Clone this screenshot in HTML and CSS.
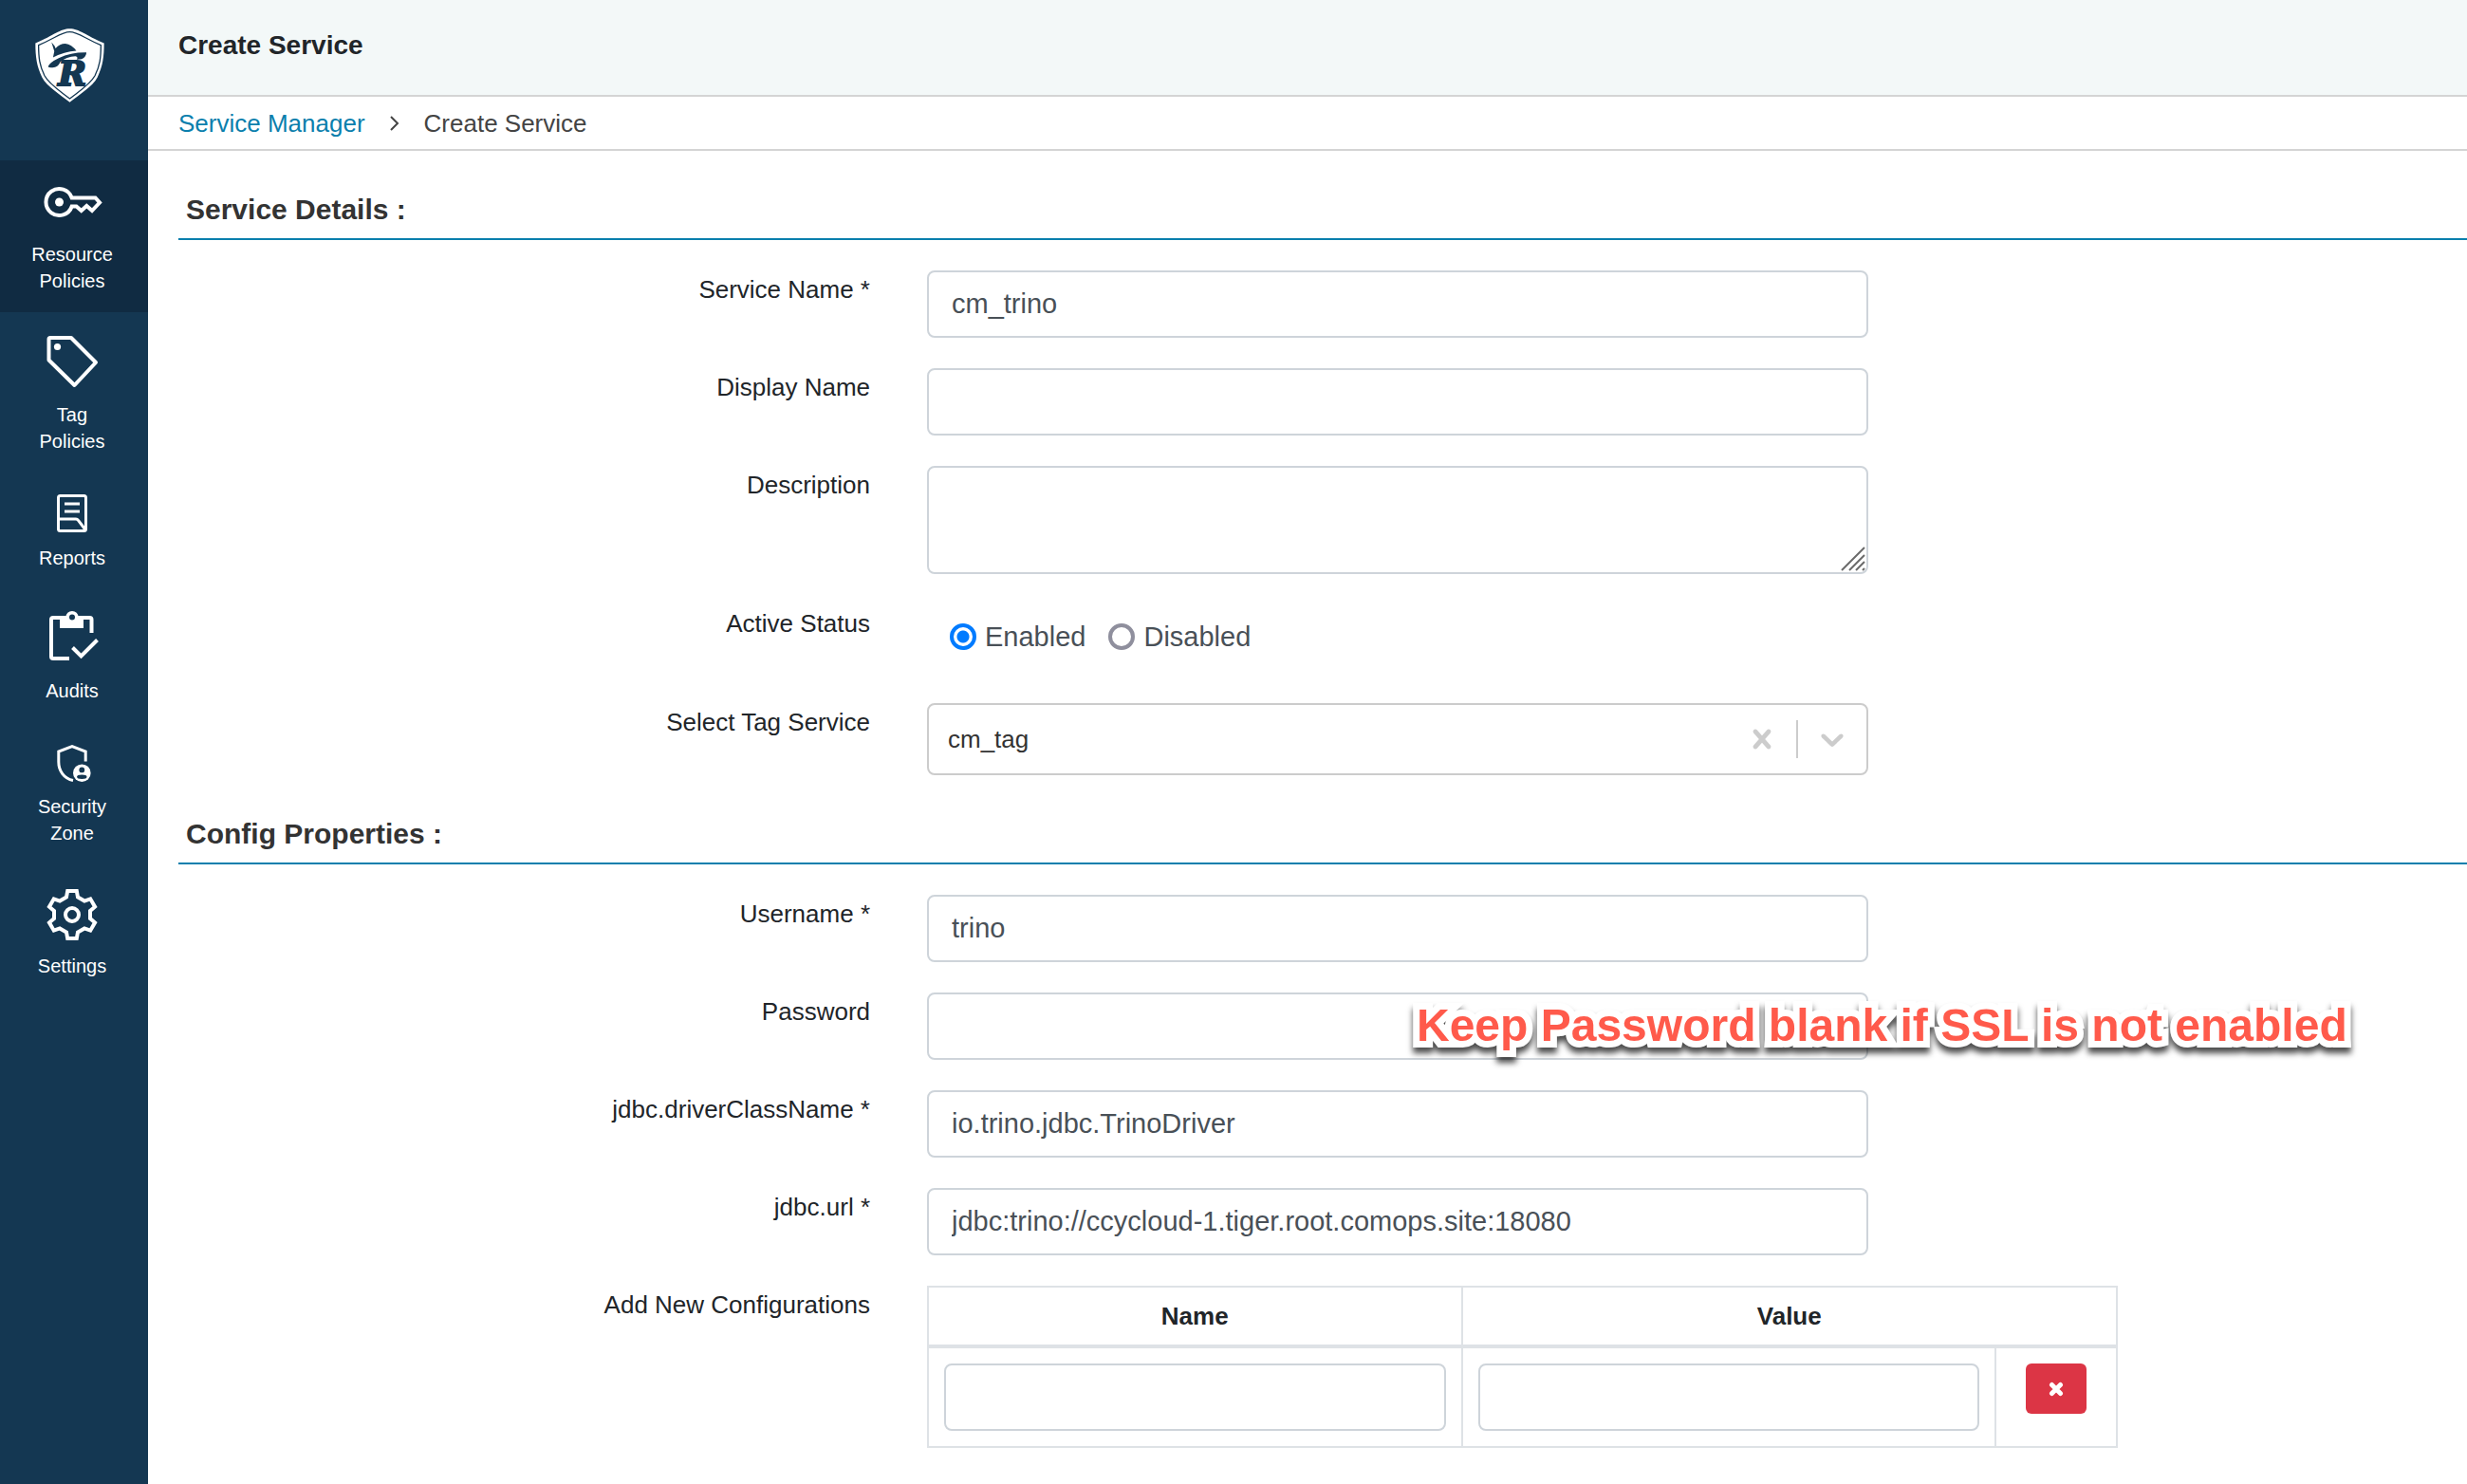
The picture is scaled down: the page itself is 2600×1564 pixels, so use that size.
FILE: index.html
```html
<!DOCTYPE html>
<html lang="en">
<head>
<meta charset="utf-8">
<title>Ranger - Create Service</title>
<link rel="stylesheet" href="styles.css">
</head>
<body>
<div class="app">
  <nav class="sidebar" aria-label="Main">
    <a class="brand" href="#" aria-label="Ranger">
      <svg width="73" height="78" viewBox="0 0 220 235">
        <path fill="#fff" d="M110 1C80 1 60 22 1 47C1 90 5 120 22 155C38 185 80 210 110 234C140 210 182 185 198 155C215 120 219 90 219 47C160 22 140 1 110 1Z"/>
        <path fill="none" stroke="#143752" stroke-width="4" d="M110 11C84 11 64 31 11 53C11 92 14 118 30 150C45 178 84 202 110 223C136 202 175 178 190 150C206 118 209 92 209 53C156 31 136 11 110 11Z"/>
        <path fill="#143752" d="M52 44L62 56L65 63Q78 48 96 48Q116 50 131 71Q92 74 57 92L61 72Z"/>
        <path fill="#143752" d="M41 121Q46 108 75 94Q115 75 163 76Q163 90 148 97L132 99Q138 90 128 88Q100 89 80 106Q72 125 54 124Q44 125 41 121Z"/>
        <text class="brand-letter" x="73" y="182">R</text>
      </svg>
    </a>
    <a class="nav-item active" href="#">
      <svg width="64" height="65" viewBox="0 0 64 65" fill="none" stroke="#fff" stroke-width="4">
        <path d="M31.7 19.5A14 14 0 1 0 31.7 28.5H36.5L41.7 33L47.3 28L53 33L61 24.5L56.5 19.5Z"/>
        <circle cx="18.5" cy="24" r="4.5" fill="#fff" stroke="none"/>
      </svg>
      <span>Resource<br>Policies</span>
    </a>
    <a class="nav-item" href="#">
      <svg width="64" height="74" viewBox="0 0 64 74" fill="none" stroke="#fff" stroke-width="4" stroke-linejoin="round">
        <path d="M9 7H31L57 33L34.500 57L7.500 30.500V8.500Q7.500 7 9 7Z"/>
        <circle cx="16.500" cy="16.500" r="3.600" fill="#fff" stroke="none"/>
      </svg>
      <span>Tag<br>Policies</span>
    </a>
    <a class="nav-item" href="#">
      <svg width="64" height="56" viewBox="0 0 64 56" fill="none" stroke="#fff" stroke-width="3">
        <rect x="17.500" y="4.500" width="29" height="37" rx="2"/>
        <path d="M24 13H40M24 21H40M17.500 29H36Q37.500 29 38.500 30.500L46.500 41"/>
      </svg>
      <span>Reports</span>
    </a>
    <a class="nav-item" href="#">
      <svg width="64" height="73" viewBox="0 0 64 73" fill="none" stroke="#fff" stroke-width="4">
        <path d="M29 53H12Q10 53 10 51V12Q10 10 12 10H50.500Q52.500 10 52.500 12V26M32.500 41.500L41.500 50.500L58.500 33.500"/>
        <path fill="#fff" stroke="none" d="M19 10H44V21H19Z"/>
        <circle cx="32" cy="9.500" r="4.800" fill="#143752" stroke-width="3.600"/>
      </svg>
      <span>Audits</span>
    </a>
    <a class="nav-item" href="#">
      <svg width="64" height="55" viewBox="0 0 64 55" fill="none" stroke="#fff" stroke-width="3">
        <path d="M46.200 21.500V11L32 5.500L17.800 11V22C17.800 31.500 23.500 39.500 33 41.500"/>
        <circle cx="42.300" cy="33.700" r="9.300" fill="#fff" stroke="none"/>
        <circle cx="42.300" cy="30.400" r="2.900" fill="#143752" stroke="none"/>
        <ellipse cx="42.300" cy="37.700" rx="5.200" ry="2.200" fill="#143752" stroke="none"/>
      </svg>
      <span>Security<br>Zone</span>
    </a>
    <a class="nav-item" href="#">
      <svg width="64" height="73" viewBox="0 0 64 73" fill="none" stroke="#fff" stroke-width="4">
        <g transform="translate(32 33)">
          <path d="M-6-18.500L-4.800-25H4.800L6-18.500L13-14.450L19.250-16.660L24.050-8.340L19-4V4L24.050 8.340L19.250 16.660L13 14.450L6 18.500L4.800 25H-4.800L-6 18.500L-13 14.450L-19.250 16.660L-24.050 8.340L-19 4V-4L-24.050-8.340L-19.250-16.660L-13-14.450Z"/>
          <circle r="7"/>
        </g>
      </svg>
      <span>Settings</span>
    </a>
  </nav>

  <main class="main">
    <header class="page-header"><h1>Create Service</h1></header>
    <nav class="breadcrumb" aria-label="Breadcrumb">
      <a href="#">Service Manager</a>
      <svg width="10" height="16" viewBox="0 0 10 16" fill="none" stroke="#444" stroke-width="2"><path d="M1 1L8 8L1 15"/></svg>
      <span>Create Service</span>
    </nav>

    <form class="form">
      <h2>Service Details :</h2>
      <div class="row">
        <label for="name">Service Name *</label>
        <div class="field"><input class="control" id="name" type="text" value="cm_trino"></div>
      </div>
      <div class="row">
        <label for="display">Display Name</label>
        <div class="field"><input class="control" id="display" type="text"></div>
      </div>
      <div class="row">
        <label for="desc">Description</label>
        <div class="field">
          <textarea class="control" id="desc"></textarea>
          <svg class="grip" width="28" height="28" viewBox="0 0 28 28" stroke="#6b6b6b" stroke-width="2"><path d="M2 26L26 2M10 26L26 10M17 26L26 17M24 26L26 24"/></svg>
        </div>
      </div>
      <div class="row">
        <span class="label" id="status">Active Status</span>
        <div class="field radios" role="radiogroup" aria-labelledby="status">
          <label><input type="radio" name="status" checked>Enabled</label>
          <label><input type="radio" name="status">Disabled</label>
        </div>
      </div>
      <div class="row">
        <label for="tag">Select Tag Service</label>
        <div class="field picker">
          <select id="tag"><option>cm_tag</option></select>
          <button class="clear" type="button" aria-label="Clear">
            <svg width="40" height="40" viewBox="0 0 20 20" fill="#ccc"><path d="M14.348 14.849c-0.469 0.469-1.229 0.469-1.697 0l-2.651-3.030-2.651 3.029c-0.469 0.469-1.229 0.469-1.697 0-0.469-0.469-0.469-1.229 0-1.697l2.758-3.15-2.759-3.152c-0.469-0.469-0.469-1.228 0-1.697s1.228-0.469 1.697 0l2.652 3.031 2.651-3.031c0.469-0.469 1.228-0.469 1.697 0s0.469 1.229 0 1.697l-2.758 3.152 2.758 3.15c0.469 0.469 0.469 1.229 0 1.698z"/></svg>
          </button>
          <span class="divider"></span>
          <svg class="chevron" width="40" height="40" viewBox="0 0 20 20" fill="#ccc"><path d="M4.516 7.548c0.436-0.446 1.043-0.481 1.576 0l3.908 3.747 3.908-3.747c0.533-0.481 1.141-0.446 1.574 0 0.436 0.445 0.408 1.197 0 1.615-0.406 0.418-4.695 4.502-4.695 4.502-0.217 0.223-0.502 0.335-0.787 0.335s-0.57-0.112-0.789-0.335c0 0-4.287-4.084-4.695-4.502s-0.436-1.17 0-1.615z"/></svg>
        </div>
      </div>

      <h2>Config Properties :</h2>
      <div class="row">
        <label for="user">Username *</label>
        <div class="field"><input class="control" id="user" type="text" value="trino"></div>
      </div>
      <div class="row">
        <label for="pass">Password</label>
        <div class="field">
          <input class="control" id="pass" type="password">
          <strong class="callout">Keep Password blank if SSL is not enabled</strong>
        </div>
      </div>
      <div class="row">
        <label for="driver">jdbc.driverClassName *</label>
        <div class="field"><input class="control" id="driver" type="text" value="io.trino.jdbc.TrinoDriver"></div>
      </div>
      <div class="row">
        <label for="url">jdbc.url *</label>
        <div class="field"><input class="control" id="url" type="text" value="jdbc:trino://ccycloud-1.tiger.root.comops.site:18080"></div>
      </div>
      <div class="row">
        <span class="label">Add New Configurations</span>
        <div class="field wide">
          <table>
            <colgroup><col><col><col class="action-col"></colgroup>
            <thead><tr><th scope="col">Name</th><th scope="col" colspan="2">Value</th></tr></thead>
            <tbody>
              <tr>
                <td><input class="control" type="text" aria-label="Name"></td>
                <td><input class="control" type="text" aria-label="Value"></td>
                <td class="action">
                  <button class="remove" type="button" aria-label="Remove">
                    <svg width="16" height="16" viewBox="0 0 16 16" stroke="#fff" stroke-width="5" stroke-linecap="round"><path d="M3.500 3.500L12.500 12.500M12.500 3.500L3.500 12.500"/></svg>
                  </button>
                </td>
              </tr>
            </tbody>
          </table>
        </div>
      </div>
    </form>
  </main>
</div>
</body>
</html>
```

FILE: styles.css
```css
* {
  box-sizing: border-box;
}

body {
  margin: 0;
  background: #fff;
  color: #212529;
  font: 26px/40px "Liberation Sans", Arial, sans-serif;
}

input,
select,
textarea,
button {
  font-family: inherit;
}

svg {
  display: block;
}

.app {
  display: flex;
  min-height: 100vh;
}

/* Sidebar */
.sidebar {
  flex: 0 0 156px;
  background: #143752;
}

.brand {
  display: flex;
  justify-content: center;
  height: 169px;
  padding: 30px 10px 0 0;
}

.brand-letter {
  fill: #143752;
  stroke: #143752;
  stroke-width: 6px;
  font: italic bold 108px "DejaVu Serif", serif;
}

.nav-item {
  display: flex;
  flex-direction: column;
  align-items: center;
  padding: 20px 4px 19px 0;
  color: #fff;
  font-size: 20px;
  line-height: 28px;
  text-align: center;
  text-decoration: none;
}

.nav-item.active {
  background: #102b42;
}

/* Page top */
.main {
  flex: 1;
  min-width: 0;
}

.page-header {
  padding: 30px 32px 34px;
  border-bottom: 2px solid #d4d4d4;
  background: #f3f8f8;
}

h1 {
  margin: 0;
  font-size: 28px;
  line-height: 36px;
}

.breadcrumb {
  display: flex;
  align-items: center;
  gap: 26px;
  height: 57px;
  padding: 0 32px;
  border-bottom: 2px solid #d4d4d4;
  color: #444;
}

.breadcrumb a {
  color: #0b7fad;
  text-decoration: none;
}

/* Form */
.form {
  padding: 0 0 32px 32px;
}

h2 {
  margin: 0 0 32px;
  padding: 44px 8px 12px;
  border-bottom: 2px solid #0b7fad;
  color: #333;
  font-size: 30px;
  line-height: 36px;
}

.row {
  display: grid;
  grid-template-columns: 729fr 992fr 203fr 308fr;
  column-gap: 60px;
  margin-bottom: 32px;
}

.row:has(+ h2) {
  margin-bottom: 0;
}

.row > label,
.row > .label {
  text-align: right;
}

.field {
  position: relative;
  min-width: 0;
}

.wide {
  grid-column: 2 / 4;
}

.control {
  display: block;
  width: 100%;
  height: 71px;
  padding: 0 24px;
  border: 2px solid #ced4da;
  border-radius: 8px;
  background: #fff;
  color: #495057;
  font-size: 29px;
}

textarea.control {
  height: 114px;
  padding: 12px 24px;
  resize: none;
}

.grip {
  position: absolute;
  right: 2px;
  bottom: 2px;
}

.radios {
  display: flex;
  gap: 24px;
  height: 72px;
  padding: 0 24px;
  color: #495057;
  font-size: 29px;
}

.radios label {
  display: flex;
  align-items: center;
  gap: 9px;
  height: 68px;
}

.radios input {
  appearance: none;
  width: 28px;
  height: 28px;
  margin: 0;
  border: 4px solid #8f8f9d;
  border-radius: 50%;
}

.radios input:checked {
  border-color: #007bff;
  background: radial-gradient(circle, #007bff 6px, #fff 7px);
}

.picker {
  display: flex;
  align-items: center;
  height: 76px;
  border: 2px solid #ccc;
  border-radius: 8px;
}

.picker select {
  flex: 1;
  height: 72px;
  padding: 0 20px;
  border: 0;
  background: none;
  color: #333;
  font-size: 26px;
  appearance: none;
}

.clear {
  padding: 16px;
  border: 0;
  background: none;
}

.divider {
  width: 2px;
  height: 40px;
  background: #ccc;
}

.chevron {
  margin: 16px;
}

.callout {
  position: absolute;
  top: 7px;
  left: 516px;
  color: #ff5a4b;
  font-size: 48px;
  line-height: 56px;
  white-space: nowrap;
  -webkit-text-stroke: 14px #fff;
  paint-order: stroke fill;
  filter: drop-shadow(0 6px 3px rgba(0, 0, 0, 0.7));
}

/* Configuration table */
table {
  width: 100%;
  border-collapse: collapse;
  table-layout: fixed;
}

.action-col {
  width: 128px;
}

th,
td {
  border: 2px solid #dee2e6;
  vertical-align: top;
}

th {
  height: 61px;
  padding: 10px 16px;
  border-bottom-width: 4px;
}

td {
  padding: 16px;
}

.action {
  text-align: center;
}

.remove {
  display: inline-flex;
  align-items: center;
  justify-content: center;
  width: 64px;
  height: 53px;
  padding: 0;
  border: 0;
  border-radius: 6px;
  background: #dc3545;
  vertical-align: top;
}
```
